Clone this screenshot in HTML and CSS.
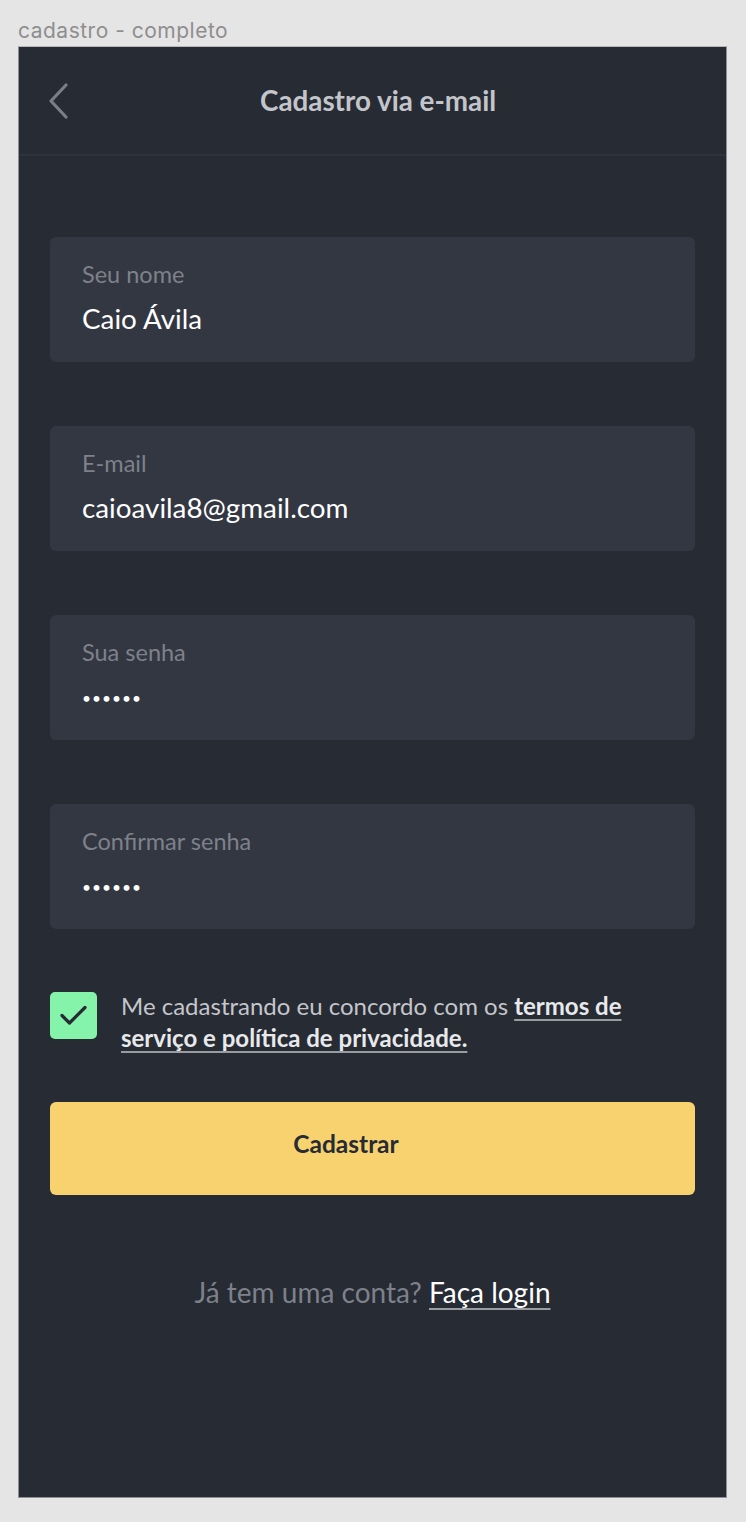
FILE: index.html
```html
<!DOCTYPE html>
<html lang="pt-BR">
<head>
<meta charset="utf-8">
<title>cadastro - completo</title>
<link rel="stylesheet" href="styles.css">
</head>
<body>
<div class="canvas">
  <div class="caption">cadastro - completo</div>
  <div class="frame">
    <header class="header">
      <button class="back" aria-label="Voltar">
        <svg width="24" height="36" viewBox="0 0 24 36"><path d="M19 2 L4 18 L19 34" fill="none" stroke="#7b7e86" stroke-width="3.2" stroke-linecap="round" stroke-linejoin="round"/></svg>
      </button>
      <h1 class="title">Cadastro via e-mail</h1>
    </header>
    <main class="content">
      <div class="fields">
        <div class="field"><span class="label">Seu nome</span><span class="value">Caio Ávila</span></div>
        <div class="field"><span class="label">E-mail</span><span class="value">caioavila8@gmail.com</span></div>
        <div class="field"><span class="label">Sua senha</span><span class="value dots">••••••</span></div>
        <div class="field"><span class="label">Confirmar senha</span><span class="value dots">••••••</span></div>
      </div>
      <div class="terms">
        <span class="check">
          <svg width="47" height="47" viewBox="0 0 47 47"><path d="M12 23.5 L19.5 31 L35 15.5" fill="none" stroke="#272b34" stroke-width="3.2" stroke-linecap="round" stroke-linejoin="round"/></svg>
        </span>
        <p class="terms-text">Me cadastrando eu concordo com os <a href="#" class="terms-link">termos de serviço e política de privacidade.</a></p>
      </div>
      <button class="submit">Cadastrar</button>
      <p class="login">Já tem uma conta? <a href="#" class="login-link">Faça login</a></p>
    </main>
  </div>
</div>
</body>
</html>
```
FILE: styles.css
```css
* { box-sizing: border-box; }
html, body { margin: 0; padding: 0; }
body {
  background: #e5e5e5;
  font-family: "Lato", "Noto Sans", sans-serif;
}
.canvas {
  padding: 18px 0 0 18px;
  width: 746px;
  height: 1522px;
}
.caption {
  font-family: "Inter", sans-serif;
  font-size: 21px;
  line-height: 26px;
  color: #8e8e8e;
  height: 28px;
  letter-spacing: 0.5px;
}
.frame {
  width: 709px;
  height: 1452px;
  background: #272b34;
  border: 1px solid #8f9096;
  border-top-color: #b8b8b8;
}
.header {
  height: 109px;
  border-bottom: 2px solid #2f333d;
  display: flex;
  align-items: center;
}
.back {
  background: none;
  border: 0;
  padding: 0;
  margin-left: 28px;
  width: 24px;
  height: 36px;
  display: flex;
}
.title {
  margin: 0 0 0 189px;
  font-size: 27.8px;
  font-weight: 700;
  color: #c3c5ca;
}
.content {
  padding: 81px 31px 0 31px;
}
.fields {
  display: flex;
  flex-direction: column;
  gap: 64px;
}
.field {
  height: 125px;
  background: #333742;
  border-radius: 6px;
  padding: 23px 32px 0;
  display: flex;
  flex-direction: column;
}
.label {
  font-size: 23.5px;
  line-height: 28px;
  color: #7e818a;
}
.value {
  margin-top: 14px;
  font-size: 27.8px;
  line-height: 34px;
  color: #ffffff;
}
.value.dots {
  font-size: 15.5px;
  line-height: 34px;
  letter-spacing: 1px;
  margin-top: 15px;
}
.terms {
  margin-top: 63px;
  display: flex;
  align-items: flex-start;
  gap: 24px;
}
.check {
  flex: none;
  width: 47px;
  height: 47px;
  border-radius: 5px;
  background: #85f3aa;
  display: flex;
}
.terms-text {
  margin: -2px 0 0;
  font-size: 24px;
  line-height: 32px;
  color: #c4c6cb;
  width: 520px;
}
.terms-link {
  color: #e8e9eb;
  font-weight: 700;
  text-decoration: underline;
  text-decoration-color: #9a9ca2;
  text-underline-offset: 4px;
}
.submit {
  margin-top: 48px;
  width: 100%;
  height: 93px;
  border: 0;
  border-radius: 6px;
  background: #f7d26f;
  color: #272b34;
  font-family: "Lato", sans-serif;
  font-weight: 700;
  font-size: 24.5px;
  padding: 0 53px 10px 0;
}
.login {
  margin: 80px 0 0;
  text-align: center;
  font-size: 28px;
  line-height: 34px;
  color: #7e818a;
}
.login-link {
  color: #ffffff;
  text-decoration: underline;
  text-decoration-color: #9a9ca2;
  text-underline-offset: 5px;
}
```
